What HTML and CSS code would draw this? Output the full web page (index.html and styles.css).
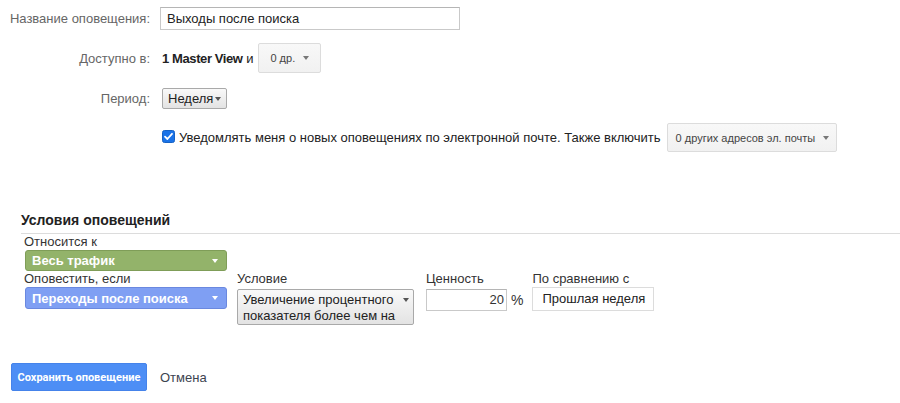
FILE: index.html
```html
<!DOCTYPE html>
<html lang="ru">
<head>
<meta charset="utf-8">
<title>Оповещение</title>
<link rel="stylesheet" href="styles.css">
</head>
<body>
<div class="form">
  <div class="row r1">
    <div class="lbl">Название оповещения:</div>
    <div class="ctl"><div class="text-input">Выходы после поиска</div></div>
  </div>
  <div class="row r2">
    <div class="lbl">Доступно в:</div>
    <div class="ctl ctl-pad">
      <span class="views"><b>1 Master View</b> и</span>
      <span class="btn btn-small btn-views">0 др.<i class="arrow"></i></span>
    </div>
  </div>
  <div class="row r3">
    <div class="lbl">Период:</div>
    <div class="ctl ctl-pad">
      <span class="select-grey select-period">Неделя<i class="arrow dark"></i></span>
    </div>
  </div>
  <div class="row r4">
    <div class="lbl"></div>
    <div class="ctl ctl-pad">
      <span class="checkbox"><svg viewBox="0 0 13 13" width="13" height="13"><rect x="0.5" y="0.5" width="12" height="12" rx="2" fill="#1a73e8" stroke="#1662c4"/><path d="M3 6.6 L5.4 9 L10 3.8" fill="none" stroke="#fff" stroke-width="1.8" stroke-linecap="round" stroke-linejoin="round"/></svg></span>
      <span class="notify">Уведомлять меня о новых оповещениях по электронной почте. Также включить</span>
      <span class="btn btn-small btn-emails">0 других адресов эл. почты<i class="arrow"></i></span>
    </div>
  </div>
</div>

<section class="cond">
  <h2 class="cond-title">Условия оповещений</h2>
  <div class="cond-body">
    <div class="field">
      <div class="flabel">Относится к</div>
      <div class="seg seg-green">Весь трафик<i class="arrow white"></i></div>
    </div>
    <div class="cond-row">
      <div class="field col1">
        <div class="flabel">Оповестить, если</div>
        <div class="seg seg-blue">Переходы после поиска<i class="arrow white"></i></div>
      </div>
      <div class="field col2">
        <div class="flabel">Условие</div>
        <div class="select-grey select-cond"><span>Увеличение процентного показателя более чем на</span><i class="arrow dark"></i></div>
      </div>
      <div class="field col3">
        <div class="flabel">Ценность</div>
        <div class="value-wrap"><div class="value-input">20</div><span class="pct">%</span></div>
      </div>
      <div class="field col4">
        <div class="flabel">По сравнению с</div>
        <div class="compare">Прошлая неделя</div>
      </div>
    </div>
  </div>
</section>

<div class="actions">
  <span class="btn-save">Сохранить оповещение</span>
  <span class="cancel">Отмена</span>
</div>
</body>
</html>
```

FILE: styles.css
```css
* { box-sizing: border-box; }
html, body { margin: 0; padding: 0; background: #fff; }
body {
  font-family: "Liberation Sans", Arial, sans-serif;
  font-size: 13px;
  color: #222;
  width: 900px;
  height: 403px;
  overflow: hidden;
}

.form { padding-top: 7px; }
.row { display: flex; align-items: center; }
.lbl {
  width: 150px;
  text-align: right;
  color: #666;
  font-size: 13px;
  flex: none;
}
.ctl { margin-left: 10px; display: flex; align-items: center; }
.ctl-pad { margin-left: 12px; }
.r1 { height: 23px; }
.r2 { height: 30px; margin-top: 13px; }
.r3 { height: 21px; margin-top: 15px; }
.r4 { height: 29px; margin-top: 14px; }

.text-input {
  width: 300px;
  height: 23px;
  border: 1px solid #c9c9c9;
  border-top-color: #b5b5b5;
  padding-left: 6px;
  line-height: 21px;
  font-size: 13px;
  color: #222;
}

.views { color: #222; font-size: 13px; }
.views b { font-weight: bold; letter-spacing: -0.4px; }

.arrow {
  display: inline-block;
  width: 0; height: 0;
  border-left: 3.5px solid transparent;
  border-right: 3.5px solid transparent;
  border-top: 4px solid #777;
}
.arrow.dark { border-top-color: #555; }
.arrow.white { border-top-color: #fff; }

.btn {
  display: inline-flex;
  align-items: center;
  justify-content: space-between;
  background: linear-gradient(#f8f8f8, #f1f1f1);
  border: 1px solid #dcdcdc;
  border-radius: 2px;
  color: #444;
}
.btn-small { font-size: 11px; }
.btn-views {
  margin-left: 5px;
  width: 63px;
  height: 30px;
  padding: 0 11px 0 11px;
}
.btn-emails {
  margin-left: 6px;
  width: 170px;
  height: 29px;
  padding: 0 7px 0 8px;
}

.select-grey {
  display: inline-flex;
  align-items: center;
  justify-content: space-between;
  background: linear-gradient(#f9f9f9, #e3e3e3);
  border: 1px solid #a9a9a9;
  border-radius: 2px;
  color: #222;
  font-size: 13px;
}
.select-period {
  width: 65px;
  height: 21px;
  padding: 0 5px 0 5px;
}

.checkbox { display: inline-flex; width: 13px; height: 13px; margin-top: -3px; }
.notify { margin-left: 4px; color: #222; font-size: 13px; }

.cond-title {
  margin: 60px 0 0 21px;
  padding-bottom: 4px;
  font-size: 14px;
  line-height: 17px;
  font-weight: bold;
  color: #222;
  border-bottom: 1px solid #dcdcdc;
}
.cond-body { padding-left: 24px; }
.flabel {
  font-size: 13px;
  line-height: 15px;
  color: #333;
}
.seg {
  display: flex;
  align-items: center;
  justify-content: space-between;
  width: 202px;
  margin-left: 1px;
  margin-top: 1px;
  padding: 0 8px 0 6px;
  border-radius: 3px;
  color: #fff;
  font-weight: bold;
  font-size: 13px;
}
.seg-green {
  height: 21px;
  background: #93b36a;
  border: 1px solid #7f9d58;
}
.seg-blue {
  height: 22px;
  background: #7f9ff3;
  border: 1px solid #6a88df;
}

.cond-row { display: flex; align-items: flex-start; }
.col1 { width: 203px; }
.col2 { margin-left: 10px; width: 177px; }
.col3 { margin-left: 12px; }
.col4 { margin-left: 9px; }

.select-cond {
  margin-top: 3px;
  width: 177px;
  height: 36px;
  padding: 2px 4px 0 5px;
  align-items: flex-start;
  line-height: 16px;
}
.select-cond .arrow { margin-top: 6px; }

.value-wrap { display: flex; align-items: center; margin-top: 3px; }
.value-input {
  width: 81px;
  height: 22px;
  border: 1px solid #c9c9c9;
  border-top-color: #b5b5b5;
  text-align: right;
  padding-right: 2px;
  line-height: 20px;
  font-size: 13px;
  color: #333;
}
.pct { margin-left: 4px; font-size: 14px; color: #333; }

.compare {
  margin-top: 1px;
  width: 122px;
  height: 24px;
  border: 1px solid #dcdcdc;
  line-height: 22px;
  padding-left: 9px;
  font-size: 13px;
  color: #222;
}

.actions {
  display: flex;
  align-items: center;
  padding-left: 11px;
  margin-top: 38px;
}
.btn-save {
  display: inline-flex;
  align-items: center;
  justify-content: center;
  width: 136px;
  height: 28px;
  background: #4d8ef5;
  border: 1px solid #4583ea;
  border-radius: 2px;
  color: #fff;
  font-family: Roboto, "Liberation Sans", Arial, sans-serif;
  font-weight: bold;
  font-size: 11px;
}
.cancel { margin-left: 13px; color: #3d4450; font-size: 13px; }
```
